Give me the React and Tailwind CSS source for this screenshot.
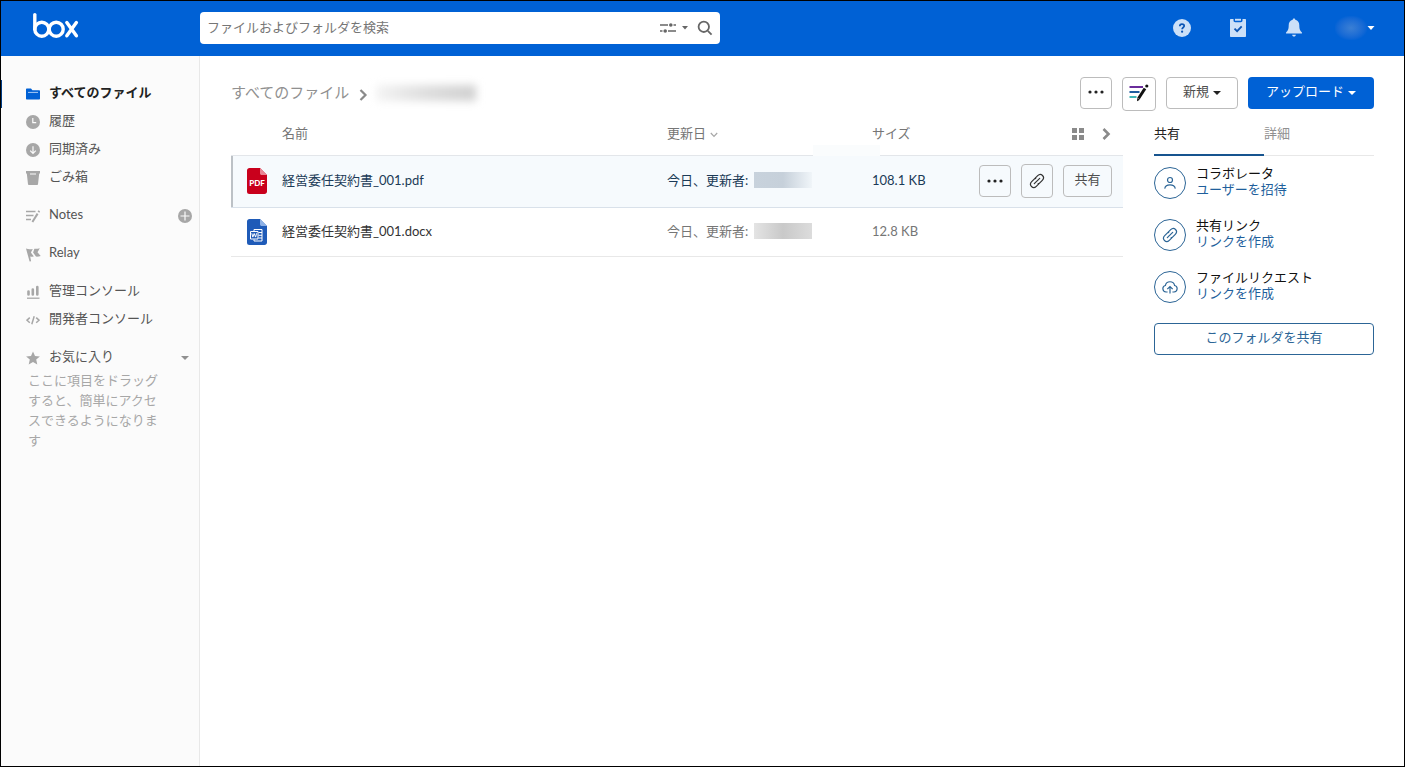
import React, { useState } from "react";

const mainLinks = [
  { label: "すべてのファイル", icon: FolderIcon, active: true },
  { label: "履歴", icon: ClockIcon },
  { label: "同期済み", icon: SyncedIcon },
  { label: "ごみ箱", icon: TrashIcon },
];

const consoleLinks = [
  { label: "管理コンソール", icon: ChartIcon },
  { label: "開発者コンソール", icon: CodeIcon },
];

const files = [
  { id: 1, name: "経営委任契約書_001.pdf", type: "pdf", size: "108.1 KB", selected: true },
  { id: 2, name: "経営委任契約書_001.docx", type: "docx", size: "12.8 KB" },
];

const shareOptions = [
  { title: "コラボレータ", action: "ユーザーを招待", icon: PersonIcon },
  { title: "共有リンク", action: "リンクを作成", icon: LinkIcon },
  { title: "ファイルリクエスト", action: "リンクを作成", icon: CloudIcon },
];

/* ---------- Icons ---------- */

function BoxLogo() {
  return (
    <svg width="48" height="28" viewBox="0 0 48 28" fill="none" stroke="#fff" strokeWidth="3.4" strokeLinecap="round" aria-label="box">
      <path d="M2.8 2.6v14.6" />
      <circle cx="9.8" cy="17.2" r="7" />
      <circle cx="24.2" cy="17.2" r="7" />
      <path d="M34.8 10.6l9.6 13.2M44.4 10.6l-9.6 13.2" />
    </svg>
  );
}

function FolderIcon() {
  return (
    <svg width="14" height="14" viewBox="0 0 14 14">
      <path d="M0 2.6c0-.6.4-1 1-1h4l1.4 1.6H13c.6 0 1 .4 1 1v7.2c0 .6-.4 1-1 1H1c-.6 0-1-.4-1-1z" fill="#0061d5" />
      <path d="M2 5.4h10" stroke="#a8cbf5" strokeWidth="1" />
    </svg>
  );
}

function ClockIcon() {
  return (
    <svg width="14" height="14" viewBox="0 0 14 14">
      <circle cx="7" cy="7" r="7" fill="#a7a7a7" />
      <path d="M6.8 3v4.6h3.4" fill="none" stroke="#fbfbfb" strokeWidth="1.2" />
    </svg>
  );
}

function SyncedIcon() {
  return (
    <svg width="14" height="14" viewBox="0 0 14 14">
      <circle cx="7" cy="7" r="7" fill="#a7a7a7" />
      <path d="M7 3.2v7M4.2 7.6L7 10.4l2.8-2.8" fill="none" stroke="#fbfbfb" strokeWidth="1.2" />
    </svg>
  );
}

function TrashIcon() {
  return (
    <svg width="14" height="14" viewBox="0 0 14 14">
      <path d="M0 0h14v2.6h-.8L12 13.2c0 .5-.4.8-.9.8H2.9c-.5 0-.9-.3-.9-.8L.8 2.6H0z" fill="#a7a7a7" />
      <path d="M4 3h6" stroke="#fbfbfb" strokeWidth="1" />
    </svg>
  );
}

function NotesIcon() {
  return (
    <svg width="14" height="14" viewBox="0 0 14 14" fill="none" stroke="#a7a7a7">
      <path d="M0 2.500h9.500M0 6.500h7.500M0 10.500h5" strokeWidth="1.500" />
      <path d="M6.400 13l5.200-8.400" strokeWidth="2" />
      <path d="M12.500 3.200l.8-1.400" strokeWidth="2" />
    </svg>
  );
}

function RelayIcon() {
  return (
    <svg width="15" height="15" viewBox="0 0 15 15" fill="#a7a7a7">
      <path d="M0 1.600c2.400 1 4.600.8 6.800.4L4.900 5.400l3 4.200c-1.500.2-2.700.1-3.700-.2l.9 4.800-1.500.4z" />
      <path d="M8.400 1.800c1.800.1 3.600 0 5.400-.6l-2.300 4 3.200 3.800c-1.600.5-3.200.7-4.700.6L7.100 5.600z" />
    </svg>
  );
}

function ChartIcon() {
  return (
    <svg width="14" height="14" viewBox="0 0 14 14" stroke="#a7a7a7" fill="none">
      <path d="M2.500 6.500v3M6.800 4.500v5M11.300 2v7.500" strokeWidth="2.600" strokeLinecap="round" />
      <path d="M1 13.200h12.500" strokeWidth="1.300" />
    </svg>
  );
}

function CodeIcon() {
  return (
    <svg width="14" height="14" viewBox="0 0 14 14" fill="none" stroke="#a7a7a7" strokeWidth="1.500">
      <path d="M3.800 4.600L1 7.200l2.800 2.600M10.200 4.600L13 7.200l-2.800 2.600M8.200 3.200L5.800 11.200" />
    </svg>
  );
}

function StarIcon() {
  return (
    <svg width="14" height="14" viewBox="0 0 14 14" fill="#a7a7a7">
      <path d="M7 .4l2 4.500 4.900.5-3.700 3.200 1.100 4.800L7 10.900l-4.300 2.500 1.100-4.800L.1 5.400 5 4.900z" />
    </svg>
  );
}

function PlusIcon() {
  return (
    <svg width="14" height="14" viewBox="0 0 14 14">
      <circle cx="7" cy="7" r="7" fill="#a7a7a7" />
      <path d="M7 2.500v9M2.500 7h9" stroke="#fbfbfb" strokeWidth="1.200" />
    </svg>
  );
}

function Caret({ className }) {
  return (
    <svg className={className} width="8" height="4" viewBox="0 0 8 4" fill="currentColor">
      <path d="M0 0h8L4 4z" />
    </svg>
  );
}

function PersonIcon() {
  return (
    <svg width="16" height="16" viewBox="0 0 16 16" fill="none" stroke="currentColor" strokeWidth="1.200">
      <circle cx="8" cy="5" r="2.500" />
      <path d="M2.700 13.600c.5-2.400 2.700-3.700 5.300-3.700s4.800 1.300 5.300 3.700" />
    </svg>
  );
}

function LinkIcon() {
  return (
    <svg width="16" height="16" viewBox="0 0 16 16" fill="none" stroke="currentColor" strokeWidth="1.200" strokeLinecap="round">
      <path d="M5.300 10.700l5.400-5.400" />
      <path d="M6.200 5.200l2.500-2.500c1.400-1.400 3.500-1.500 4.800-.2s1.200 3.400-.2 4.800L10.800 9.800c-.5.500-1 .8-1.600.9" />
      <path d="M9.800 10.800l-2.500 2.500c-1.400 1.400-3.500 1.500-4.800.2s-1.200-3.400.2-4.800L5.200 6.200c.5-.5 1-.8 1.600-.9" />
    </svg>
  );
}

function CloudIcon() {
  return (
    <svg width="16" height="16" viewBox="0 0 16 16" fill="none" stroke="currentColor" strokeWidth="1.200">
      <path d="M5.600 13H4a3.300 3.300 0 0 1-.6-6.500 4.700 4.700 0 0 1 9.200 0A3.300 3.300 0 0 1 12 13h-1.600" />
      <path d="M8 14.500V7.600M5.300 10.200L8 7.500l2.700 2.700" />
    </svg>
  );
}

function DotsIcon() {
  return (
    <svg width="16" height="4" viewBox="0 0 16 4" fill="#222">
      <circle cx="2" cy="2" r="1.600" />
      <circle cx="8" cy="2" r="1.600" />
      <circle cx="14" cy="2" r="1.600" />
    </svg>
  );
}

function NotesColorIcon() {
  return (
    <svg width="20" height="18" viewBox="0 0 20 18" fill="none">
      <path d="M.500 3h13.500" stroke="#6a2c9b" strokeWidth="2" />
      <path d="M.500 8h10" stroke="#1d5b9e" strokeWidth="2" />
      <path d="M.500 13h7" stroke="#3fb5b5" strokeWidth="2" />
      <path d="M9.500 14.500l6.500-10" stroke="#111" strokeWidth="3" />
      <path d="M8 17.200l.3-3.200 2.600 1.700z" fill="#111" />
      <circle cx="17.800" cy="2" r="1.600" fill="#111" />
    </svg>
  );
}

function FileIcon({ type }) {
  const isPdf = type === "pdf";
  return (
    <svg width="20" height="26" viewBox="0 0 20 26">
      <path d="M2.500 0H13l7 7v16.500c0 1.400-1.100 2.500-2.500 2.500h-15A2.500 2.500 0 0 1 0 23.500v-21C0 1.100 1.100 0 2.500 0z" fill={isPdf ? "#c9001c" : "#1f5bb8"} />
      <path d="M13 0l7 7h-5.200C13.800 7 13 6.200 13 5.200z" fill={isPdf ? "#e98594" : "#8db1e6"} />
      {isPdf ? (
        <text x="10" y="18" textAnchor="middle" fill="#fff" className="text-[8px] font-black">PDF</text>
      ) : (
        <g fill="none" stroke="#fff">
          <path d="M7 12v-1.500h8v11.500H7v-1.500M11.500 13.500H15M11.500 16.300H15M11.500 19H15" />
          <path d="M3.500 12.500h7.500v7.500H3.500z" />
          <path d="M4.800 14.300l1 3.800 1.400-3.600 1.400 3.600 1-3.800" />
        </g>
      )}
    </svg>
  );
}

/* ---------- Sections ---------- */

function NavItem({ icon: Icon, label, active, children }) {
  return (
    <div className={`flex h-7 items-center border-l pr-[7px] ${active ? "border-[#003c84]" : "border-transparent"}`}>
      <a href="#" className={`flex flex-1 items-center gap-2 pl-6 leading-5 ${active ? "font-bold text-[#222]" : "text-[#555]"}`}>
        <span className="flex w-[15px] shrink-0"><Icon /></span>
        <span className="pb-1">{label}</span>
      </a>
      {children}
    </div>
  );
}

function Header() {
  return (
    <header className="flex h-[55px] shrink-0 items-center bg-[#0061d5] pb-[2px]">
      <a href="#" className="w-[199px] shrink-0 pb-1 pl-[31px]"><BoxLogo /></a>
      <div className="flex h-8 w-[520px] items-center rounded bg-white pr-[7px]">
        <input
          type="text"
          aria-label="検索"
          placeholder="ファイルおよびフォルダを検索"
          className="min-w-0 flex-1 bg-transparent pb-[2px] pl-[7px] outline-none placeholder:text-[#767676]"
        />
        <button type="button" aria-label="検索フィルタ" className="flex items-center gap-1 text-[#555]">
          <svg width="18" height="12" viewBox="0 0 18 12" fill="none" stroke="#666" strokeWidth="1.600">
            <path d="M1 3h8M14.500 3H17M1 9h2.500M9 9h8" />
            <circle cx="11.800" cy="3" r="1.800" fill="#666" stroke="none" />
            <circle cx="6.200" cy="9" r="1.800" fill="#666" stroke="none" />
          </svg>
          <svg width="8" height="4" viewBox="0 0 8 4" fill="#666"><path d="M1 0h6L4 3.400z" /></svg>
        </button>
        <button type="button" aria-label="検索する" className="ml-2">
          <svg width="16" height="16" viewBox="0 0 16 16" fill="none" stroke="#666" strokeWidth="1.800">
            <circle cx="6.800" cy="6.800" r="5.200" />
            <path d="M10.800 10.800l3.800 3.800" />
          </svg>
        </button>
      </div>
      <div className="ml-auto flex items-center pr-[29px]">
        <button type="button" aria-label="ヘルプ" className="mr-[38px]">
          <svg width="18" height="18" viewBox="0 0 18 18">
            <circle cx="9" cy="9" r="9" fill="#cce0f8" />
            <path d="M6.800 7.200c0-1.300.9-2.100 2.200-2.100s2.200.8 2.200 1.900c0 1.500-2.100 1.500-2.100 3.200" fill="none" stroke="#0b55b5" strokeWidth="1.700" />
            <circle cx="9.100" cy="12.700" r="1.100" fill="#0b55b5" />
          </svg>
        </button>
        <button type="button" aria-label="タスク" className="mr-[38px]">
          <svg width="18" height="20" viewBox="0 0 18 20">
            <path d="M2 1h2.500v1.500c0 1 .7 1.700 1.700 1.700h5.600c1 0 1.700-.7 1.700-1.700V1H16c.6 0 1 .4 1 1v16c0 .6-.4 1-1 1H2c-.6 0-1-.4-1-1V2c0-.6.4-1 1-1z" fill="#cce0f8" />
            <path d="M6 .800h6v1.900H6z" fill="#cce0f8" />
            <path d="M5.500 10.600l2.600 2.600 4.600-4.800" fill="none" stroke="#0b55b5" strokeWidth="1.800" />
          </svg>
        </button>
        <button type="button" aria-label="通知" className="mr-[32px]">
          <svg width="18" height="20" viewBox="0 0 18 20" fill="#cce0f8">
            <path d="M9 .600c.8 0 1.200.5 1.300 1.200 2.700.7 4 2.800 4 5.400 0 4.200.9 5.600 2.600 7.200.3.400.1 1.100-.5 1.100H1.600c-.6 0-.8-.7-.5-1.100 1.700-1.600 2.600-3 2.600-7.200 0-2.600 1.300-4.700 4-5.400C7.800 1.100 8.200.600 9 .600z" />
            <path d="M7.200 16.800h3.600c0 1.100-.7 1.800-1.800 1.800s-1.800-.7-1.800-1.800z" />
          </svg>
        </button>
        <button type="button" aria-label="アカウント" className="flex items-center text-white">
          <span className="h-6 w-8 bg-radial from-[#3a7fd4] to-[#0061d5] to-75%" />
          <svg width="8" height="4" viewBox="0 0 8 4" fill="currentColor"><path d="M.500 0h7L4 4z" /></svg>
        </button>
      </div>
    </header>
  );
}

function Sidebar() {
  return (
    <nav className="flex w-[199px] shrink-0 flex-col gap-[10px] border-r border-[#e8e8e8] bg-[#fbfbfb] pt-6">
      <div>
        {mainLinks.map((link) => <NavItem key={link.label} {...link} />)}
      </div>
      <NavItem icon={NotesIcon} label="Notes">
        <button type="button" aria-label="新しいNote"><PlusIcon /></button>
      </NavItem>
      <NavItem icon={RelayIcon} label="Relay" />
      <div>
        {consoleLinks.map((link) => <NavItem key={link.label} {...link} />)}
      </div>
      <div>
        <NavItem icon={StarIcon} label="お気に入り">
          <button type="button" aria-label="お気に入りを折りたたむ" className="pr-[3px] text-[#909090]"><Caret /></button>
        </NavItem>
        <p className="-mt-[2px] pr-[34px] pl-[27px] leading-5 text-[#a7a7a7]">
          ここに項目をドラッグすると、簡単にアクセスできるようになります
        </p>
      </div>
    </nav>
  );
}

function FileRow({ file }) {
  return (
    <tr className={file.selected ? "h-[52px] border-b border-[#d9e1ea] bg-[#f6fafd] text-[#1b3a57]" : "h-[49px] border-b border-[#e8e8e8] text-[#767676]"}>
      <td className={file.selected ? "pl-4 shadow-[inset_2px_0_#bcc1c6]" : "pl-4"}>
        <FileIcon type={file.type} />
      </td>
      <td className="pb-[2px]">
        <a href="#" className={file.selected ? "text-[#1b3a57]" : "text-[#333]"}>{file.name}</a>
      </td>
      <td className="pb-[2px]">
        <div className="flex items-center gap-[6px]">
          <span>今日、更新者:</span>
          <span className={`h-4 w-[58px] bg-linear-to-r ${file.selected ? "from-[#c8d2dc] via-[#c6d0da] to-[#f0f5f9]" : "from-[#e4e4e4] via-[#c9c9c9] to-[#dcdcdc]"}`} />
        </div>
      </td>
      <td className="pb-[2px]">{file.size}</td>
      <td>
        {file.selected && (
          <div className="flex items-center justify-end gap-[10px] pr-[11px]">
            <button type="button" aria-label="その他のオプション" className="flex h-8 w-8 items-center justify-center rounded border border-[#bcbcbc]">
              <DotsIcon />
            </button>
            <button type="button" aria-label="リンクをコピー" className="flex h-[34px] w-8 items-center justify-center rounded border border-[#bcbcbc] text-[#333]">
              <LinkIcon />
            </button>
            <button type="button" className="h-8 w-[49px] rounded border border-[#bcbcbc] pb-1 text-[#4e4e4e]">共有</button>
          </div>
        )}
      </td>
    </tr>
  );
}

function FileTable() {
  return (
    <table className="w-full table-fixed border-collapse text-left">
      <colgroup>
        <col className="w-[51px]" />
        <col />
        <col className="w-[205px]" />
        <col className="w-[106px]" />
        <col className="w-[145px]" />
      </colgroup>
      <thead>
        <tr className="h-11 border-b border-[#e3e6ea] text-[#767676]">
          <td />
          <th className="font-normal">名前</th>
          <th className="relative font-normal">
            <button type="button" className="flex items-center gap-1">
              更新日
              <svg className="mt-1" width="8" height="6" viewBox="0 0 8 6" fill="none" stroke="#a7a7a7" strokeWidth="1.200">
                <path d="M.800 1L4 4.400 7.200 1" />
              </svg>
            </button>
            <span className="absolute -bottom-px left-[146px] h-[11px] w-[67px] bg-[#fafcfd]" />
          </th>
          <th className="font-normal">サイズ</th>
          <td>
            <div className="flex items-center justify-end gap-[18px] pt-[2px] pr-3">
              <button type="button" aria-label="グリッド表示">
                <svg width="12" height="12" viewBox="0 0 12 12" fill="#8a8a8a">
                  <path d="M0 0h5v5H0zM7 0h5v5H7zM0 7h5v5H0zM7 7h5v5H7z" />
                </svg>
              </button>
              <button type="button" aria-label="サイドバーを閉じる">
                <svg width="9" height="12" viewBox="0 0 9 12" fill="none" stroke="#8a8a8a" strokeWidth="2.600">
                  <path d="M1.500 1l5 5-5 5" />
                </svg>
              </button>
            </div>
          </td>
        </tr>
      </thead>
      <tbody>
        {files.map((file) => <FileRow key={file.id} file={file} />)}
      </tbody>
    </table>
  );
}

function SharePanel() {
  const [tab, setTab] = useState("share");
  return (
    <aside className="w-[220px] shrink-0">
      <div className="flex h-[45px]">
        <button
          type="button"
          onClick={() => setTab("share")}
          className={`flex-1 text-left ${tab === "share" ? "border-b-2 border-[#17548f] text-[#222]" : "border-b border-[#e8e8e8] text-[#909090]"}`}
        >
          共有
        </button>
        <button
          type="button"
          onClick={() => setTab("detail")}
          className={`flex-1 text-left ${tab === "detail" ? "border-b-2 border-[#17548f] text-[#222]" : "border-b border-[#e8e8e8] text-[#909090]"}`}
        >
          詳細
        </button>
      </div>
      <ul className="mt-[11px] flex flex-col gap-5">
        {shareOptions.map(({ title, action, icon: Icon }) => (
          <li key={title} className="flex h-8 items-center gap-[10px]">
            <span className="flex h-8 w-8 items-center justify-center rounded-full border border-[#2c6596] text-[#2c6596]"><Icon /></span>
            <div className="pb-1 leading-4">
              <p className="text-[#111]">{title}</p>
              <a href="#" className="block text-[#1f5f9c]">{action}</a>
            </div>
          </li>
        ))}
      </ul>
      <button type="button" className="mt-5 h-8 w-full rounded border border-[#2c6596] pb-1 text-[#2c6596]">
        このフォルダを共有
      </button>
    </aside>
  );
}

export default function App() {
  return (
    <div className="flex min-h-screen flex-col border border-black bg-white font-[Lato,'Noto_Sans_CJK_JP',sans-serif] text-[13px] leading-5">
      <Header />
      <div className="flex flex-1">
        <Sidebar />
        <main className="min-w-0 flex-1 pt-[21px] pr-[30px] pl-[31px]">
          <div className="flex h-[34px] items-start">
            <div className="flex h-8 flex-1 items-center text-[15px] text-[#909090]">
              <a href="#" className="pb-[2px]">すべてのファイル</a>
              <svg className="mr-2 ml-[10px] mt-1" width="9" height="12" viewBox="0 0 9 12" fill="none" stroke="#8a8a8a" strokeWidth="2.200">
                <path d="M1.500 1l5 5-5 5" />
              </svg>
              <span className="h-4 w-[100px] bg-linear-to-r from-[#f4f4f4] via-[#dedede] to-[#d0d0d0] blur-[4px]" />
            </div>
            <div className="flex items-start gap-[10px]">
              <button type="button" aria-label="その他のオプション" className="flex h-8 w-8 items-center justify-center rounded border border-[#bcbcbc] pb-[2px]">
                <DotsIcon />
              </button>
              <button type="button" aria-label="Notesを開く" className="flex h-[34px] w-[34px] items-center justify-center rounded border border-[#bcbcbc] pb-[2px]">
                <NotesColorIcon />
              </button>
              <button type="button" className="flex h-8 w-[72px] items-center justify-center gap-1 rounded border border-[#bcbcbc] text-[#4e4e4e]">
                <span className="pb-1">新規</span>
                <Caret className="text-[#222]" />
              </button>
              <button type="button" className="flex h-8 w-[126px] items-center justify-center gap-1 rounded bg-[#0061d5] text-white">
                <span className="pb-1">アップロード</span>
                <Caret />
              </button>
            </div>
          </div>
          <div className="flex gap-[31px]">
            <div className="min-w-0 flex-1"><FileTable /></div>
            <SharePanel />
          </div>
        </main>
      </div>
    </div>
  );
}
